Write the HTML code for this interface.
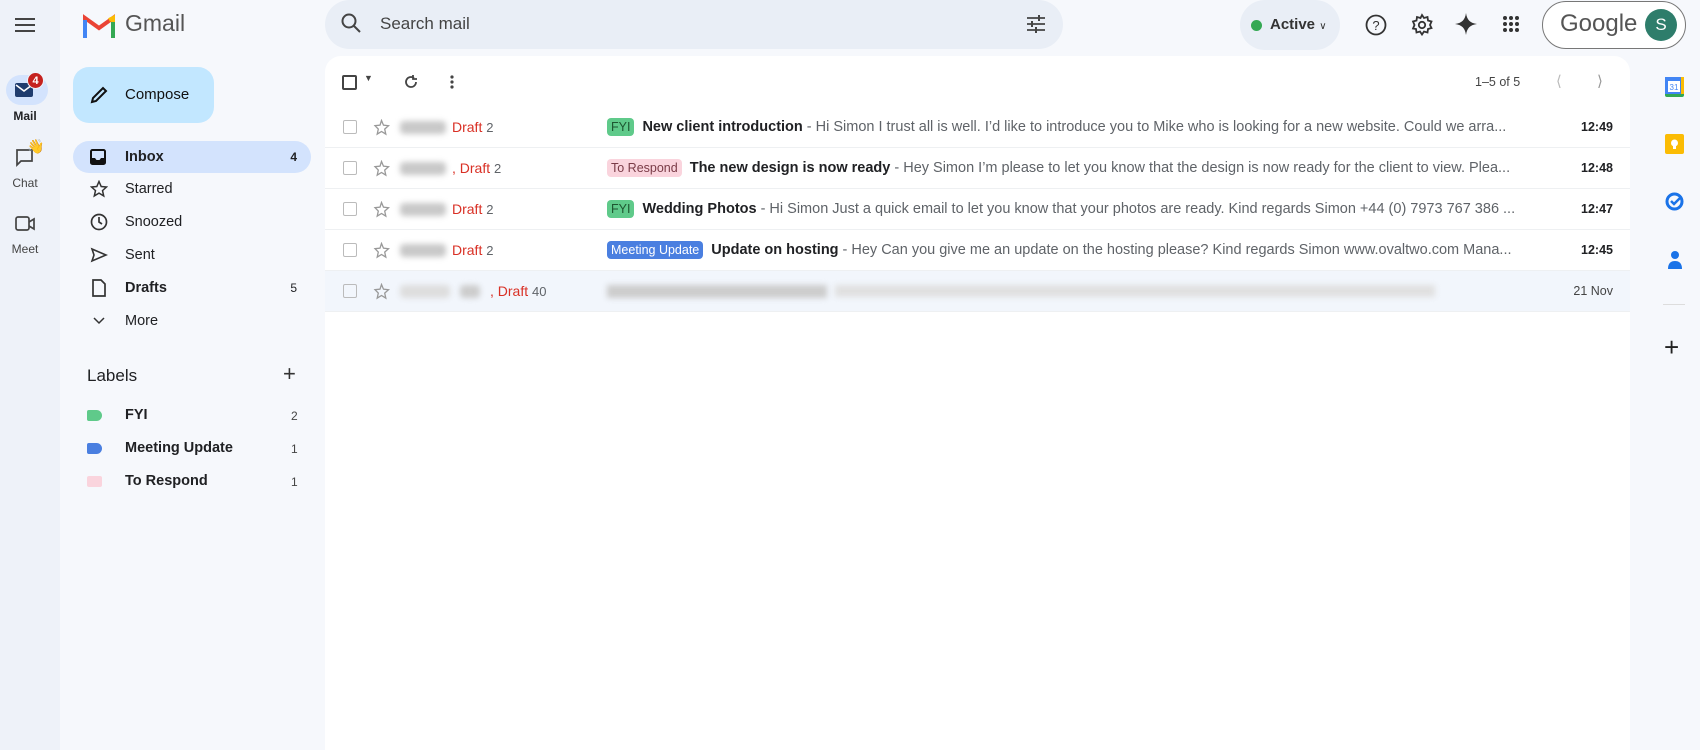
<!DOCTYPE html>
<html><head><meta charset="utf-8"><style>
*{box-sizing:border-box;margin:0;padding:0}
body{width:1700px;height:750px;overflow:hidden;background:#f6f8fc;font-family:"Liberation Sans",Arial,sans-serif;color:#202124;position:relative}
.a{position:absolute}
.rail{left:0;top:0;width:60px;height:750px;background:#eef2f9}
.nav{font-size:14.5px;color:#202124}
.navi{position:absolute;left:73px;width:238px;height:32px;border-radius:16px;display:flex;align-items:center}
.navi svg{position:absolute;left:17px}
.navi span{position:absolute;left:52px}
.navi b{position:absolute;right:14px;font-size:12px;font-weight:normal}
.main{left:325px;top:56px;width:1305px;height:694px;background:#fff;border-radius:16px 16px 0 0}
.row{position:absolute;left:325px;width:1305px;height:41px;border-bottom:1px solid #eef0f2;font-size:14.5px;display:flex;align-items:center;white-space:nowrap}
.cb{position:absolute;left:18px;width:14px;height:14px;border:1.5px solid #bbb;border-radius:2px}
.st{position:absolute;left:48px;top:12px}
.snd{position:absolute;left:75px;width:46px;height:13px;background:#c8c8c8;filter:blur(3px);border-radius:4px}
.dr{position:absolute;left:127px;color:#d93025;font-size:14px}
.dr i{font-style:normal;color:#5f6368;font-size:13px}
.subj{position:absolute;left:282px;display:flex;align-items:center}
.chip{font-size:12.5px;padding:2px 4px;border-radius:4px;margin-right:8px}
.subj b{color:#202124}
.subj em{font-style:normal;color:#5f6368;margin-left:4px}
.tm{position:absolute;right:17px;font-weight:bold;font-size:12.5px}
.lab{position:absolute;left:87px;width:15px;height:11px;border-radius:2px 6px 6px 2px}
</style></head><body>
<div class="a rail"></div>
<!-- rail -->
<svg class="a" style="left:14px;top:16px" width="22" height="18"><path d="M1 3h20M1 9h20M1 15h20" stroke="#444" stroke-width="2"/></svg>
<div class="a" style="left:6px;top:75px;width:42px;height:30px;border-radius:15px;background:#d3e3fd"></div>
<svg class="a" style="left:15px;top:83px" width="18" height="14"><rect x="0" y="0" width="18" height="14" rx="2" fill="#1f3c6e"/><path d="M1 2l8 6 8-6" stroke="#fff" stroke-width="1.6" fill="none"/></svg>
<div class="a" style="left:27px;top:72px;width:17px;height:17px;border-radius:50%;background:#c5221f;color:#fff;font-size:11px;font-weight:bold;text-align:center;line-height:17px;border:1.5px solid #eef2f9">4</div>
<div class="a" style="left:0;top:109px;width:50px;text-align:center;font-size:12px;font-weight:bold">Mail</div>
<svg class="a" style="left:15px;top:148px" width="22" height="22"><path d="M2 2h15v11H6l-4 4z" fill="none" stroke="#444" stroke-width="1.7"/></svg>
<div class="a" style="left:27px;top:138px;font-size:14px">👋</div>
<div class="a" style="left:0;top:176px;width:50px;text-align:center;font-size:12px;color:#444">Chat</div>
<svg class="a" style="left:15px;top:215px" width="22" height="18"><rect x="1" y="2" width="13" height="13" rx="2" fill="none" stroke="#444" stroke-width="1.7"/><path d="M14 7l5-3v10l-5-3" fill="none" stroke="#444" stroke-width="1.7"/></svg>
<div class="a" style="left:0;top:242px;width:50px;text-align:center;font-size:12px;color:#444">Meet</div>
<!-- logo -->
<svg class="a" style="left:83px;top:14px" width="32" height="24" viewBox="0 0 32 24"><path d="M2 24V4l14 10L30 4v20" fill="none" stroke="#ea4335" stroke-width="4"/><path d="M2 24V6" stroke="#4285f4" stroke-width="4"/><path d="M30 24V6" stroke="#34a853" stroke-width="4"/><path d="M26 6l4-2v4" stroke="#fbbc04" stroke-width="4"/></svg>
<div class="a" style="left:125px;top:10px;font-size:23px;color:#555">Gmail</div>
<!-- search -->
<div class="a" style="left:325px;top:0;width:738px;height:49px;border-radius:25px;background:#e9eef6"></div>
<svg class="a" style="left:341px;top:13px" width="22" height="22"><circle cx="8" cy="8" r="6.5" fill="none" stroke="#444" stroke-width="2"/><path d="M13 13l6 6" stroke="#444" stroke-width="2"/></svg>
<div class="a" style="left:380px;top:14px;font-size:17px;color:#444">Search mail</div>
<svg class="a" style="left:1026px;top:14px" width="20" height="20"><path d="M1 4h18M1 10h18M1 16h18" stroke="#444" stroke-width="1.8"/><path d="M13 1v6M6 7v6M10 13v6" stroke="#444" stroke-width="2"/></svg>
<div class="a" style="left:1240px;top:0;width:100px;height:50px;border-radius:25px;background:#e9eef6"></div>
<div class="a" style="left:1251px;top:20px;width:11px;height:11px;border-radius:50%;background:#34a853"></div>
<div class="a" style="left:1270px;top:16px;font-size:15px;font-weight:bold;color:#333">Active <span style="font-size:10px;font-weight:normal">&#8744;</span></div>
<svg class="a" style="left:1365px;top:14px" width="22" height="22"><circle cx="11" cy="11" r="9.5" fill="none" stroke="#333" stroke-width="1.8"/><text x="11" y="16" font-size="13" text-anchor="middle" fill="#333" font-family="Liberation Sans">?</text></svg>
<svg class="a" style="left:1410px;top:13px" width="24" height="24" viewBox="0 0 24 24"><path d="M12 2l2 3 3.5-1 .5 3.5 3.5 1-1.5 3.5 1.5 3-3.5 1-.5 3.5-3.5-1-2 3-2-3-3.5 1-.5-3.5L3 15.5 4.5 12 3 8.5 6.5 7.5 7 4l3.5 1z" fill="none" stroke="#333" stroke-width="1.8"/><circle cx="12" cy="12" r="3.2" fill="none" stroke="#333" stroke-width="1.8"/></svg>
<svg class="a" style="left:1455px;top:13px" width="22" height="22"><path d="M11 0C12 7 15 10 22 11 15 12 12 15 11 22 10 15 7 12 0 11 7 10 10 7 11 0z" fill="#333"/></svg>
<svg class="a" style="left:1502px;top:15px" width="18" height="18"><g fill="#333"><circle cx="3" cy="3" r="2"/><circle cx="9" cy="3" r="2"/><circle cx="15" cy="3" r="2"/><circle cx="3" cy="9" r="2"/><circle cx="9" cy="9" r="2"/><circle cx="15" cy="9" r="2"/><circle cx="3" cy="15" r="2"/><circle cx="9" cy="15" r="2"/><circle cx="15" cy="15" r="2"/></g></svg>
<div class="a" style="left:1542px;top:1px;width:144px;height:48px;border-radius:24px;border:1.5px solid #777;background:#fff"></div>
<div class="a" style="left:1560px;top:10px;font-size:24px;color:#555">Google</div>
<div class="a" style="left:1645px;top:9px;width:32px;height:32px;border-radius:50%;background:#2e7d6b;color:#fff;font-size:17px;text-align:center;line-height:32px">S</div>
<!-- compose -->
<div class="a" style="left:73px;top:67px;width:141px;height:56px;border-radius:16px;background:#c2e7ff"></div>
<svg class="a" style="left:89px;top:85px" width="20" height="20"><path d="M3 17l1-4L14 3l3 3L7 16z" fill="none" stroke="#111" stroke-width="2"/></svg>
<div class="a" style="left:125px;top:86px;font-size:15px;color:#111">Compose</div>
<!-- nav -->
<div class="nav">
<div class="navi" style="top:141px;background:#d3e3fd;font-weight:bold"><svg width="16" height="16"><rect x="1" y="1" width="14" height="14" rx="1.5" fill="none" stroke="#111" stroke-width="2"/><path d="M1 9h4l1.5 2h3L11 9h4v6H1z" fill="#111"/></svg><span>Inbox</span><b style="font-weight:bold">4</b></div>
<div class="navi" style="top:173px"><svg width="18" height="18"><path d="M9 1.5l2.2 5 5.3.5-4 3.6 1.2 5.3L9 13.1 4.3 15.9l1.2-5.3-4-3.6 5.3-.5z" fill="none" stroke="#333" stroke-width="1.5"/></svg><span>Starred</span></div>
<div class="navi" style="top:206px"><svg width="18" height="18"><circle cx="9" cy="9" r="7.5" fill="none" stroke="#333" stroke-width="1.7"/><path d="M9 4v5l3 2" fill="none" stroke="#333" stroke-width="1.7"/></svg><span>Snoozed</span></div>
<div class="navi" style="top:239px"><svg width="18" height="18"><path d="M2 3l14 6-14 6 2-6z" fill="none" stroke="#333" stroke-width="1.6"/></svg><span>Sent</span></div>
<div class="navi" style="top:272px;font-weight:bold"><svg width="18" height="18"><path d="M3 1h8l4 4v12H3z" fill="none" stroke="#333" stroke-width="1.7"/></svg><span>Drafts</span><b>5</b></div>
<div class="navi" style="top:305px"><svg width="18" height="18"><path d="M4 6l5 5 5-5" fill="none" stroke="#333" stroke-width="1.5"/></svg><span>More</span></div>
</div>
<div class="a" style="left:87px;top:366px;font-size:17px">Labels</div>
<div class="a" style="left:283px;top:361px;font-size:22px;color:#333">+</div>
<div class="lab" style="top:410px;background:#5fca8a"></div>
<div class="lab" style="top:443px;background:#4a7fe0"></div>
<div class="lab" style="top:476px;background:#fad4dd;border-radius:2px"></div>
<div class="a" style="left:125px;top:407px;font-size:14.5px;font-weight:bold">FYI</div>
<div class="a" style="left:125px;top:440px;font-size:14.5px;font-weight:bold">Meeting Update</div>
<div class="a" style="left:125px;top:473px;font-size:14.5px;font-weight:bold">To Respond</div>
<div class="a" style="left:291px;top:409px;font-size:12px;color:#444">2</div>
<div class="a" style="left:291px;top:442px;font-size:12px;color:#444">1</div>
<div class="a" style="left:291px;top:475px;font-size:12px;color:#444">1</div>
<!-- main -->
<div class="a main"></div>
<div class="a" style="left:342px;top:75px;width:15px;height:15px;border:2px solid #444;border-radius:2px"></div>
<div class="a" style="left:364px;top:73px;font-size:9px;color:#444">▼</div>
<svg class="a" style="left:403px;top:74px" width="16" height="16"><path d="M13 8a5 5 0 1 1-2-4" fill="none" stroke="#444" stroke-width="1.8"/><path d="M10 1v4h4" fill="none" stroke="#444" stroke-width="1.8"/></svg>
<svg class="a" style="left:449px;top:74px" width="6" height="16"><circle cx="3" cy="3" r="1.6" fill="#444"/><circle cx="3" cy="8" r="1.6" fill="#444"/><circle cx="3" cy="13" r="1.6" fill="#444"/></svg>
<div class="a" style="left:1475px;top:75px;font-size:12.5px;color:#444">1–5 of 5</div>
<div class="a" style="left:1556px;top:72px;font-size:15px;color:#bbb">&#10216;</div>
<div class="a" style="left:1597px;top:72px;font-size:15px;color:#999">&#10217;</div>

<div class="row" style="top:107px"><div class="cb"></div><svg class="st" width="17" height="17"><path d="M8.5 1.5l2 4.7 5 .5-3.8 3.4 1.1 5-4.3-2.6-4.3 2.6 1.1-5L2 6.7l5-.5z" fill="none" stroke="#999" stroke-width="1.3"/></svg><div class="snd"></div><div class="dr">Draft <i>2</i></div><div class="subj"><span class="chip" style="background:#5fca8a;color:#1e5631">FYI</span><b>New client introduction</b><em>- Hi Simon I trust all is well. I’d like to introduce you to Mike who is looking for a new website. Could we arra...</em></div><div class="tm">12:49</div></div>
<div class="row" style="top:148px"><div class="cb"></div><svg class="st" width="17" height="17"><path d="M8.5 1.5l2 4.7 5 .5-3.8 3.4 1.1 5-4.3-2.6-4.3 2.6 1.1-5L2 6.7l5-.5z" fill="none" stroke="#999" stroke-width="1.3"/></svg><div class="snd"></div><div class="dr">, Draft <i>2</i></div><div class="subj"><span class="chip" style="background:#fad4dd;color:#7a3b47">To Respond</span><b>The new design is now ready</b><em>- Hey Simon I’m please to let you know that the design is now ready for the client to view. Plea...</em></div><div class="tm">12:48</div></div>
<div class="row" style="top:189px"><div class="cb"></div><svg class="st" width="17" height="17"><path d="M8.5 1.5l2 4.7 5 .5-3.8 3.4 1.1 5-4.3-2.6-4.3 2.6 1.1-5L2 6.7l5-.5z" fill="none" stroke="#999" stroke-width="1.3"/></svg><div class="snd"></div><div class="dr">Draft <i>2</i></div><div class="subj"><span class="chip" style="background:#5fca8a;color:#1e5631">FYI</span><b>Wedding Photos</b><em>- Hi Simon Just a quick email to let you know that your photos are ready. Kind regards Simon +44 (0) 7973 767 386 ...</em></div><div class="tm">12:47</div></div>
<div class="row" style="top:230px"><div class="cb"></div><svg class="st" width="17" height="17"><path d="M8.5 1.5l2 4.7 5 .5-3.8 3.4 1.1 5-4.3-2.6-4.3 2.6 1.1-5L2 6.7l5-.5z" fill="none" stroke="#999" stroke-width="1.3"/></svg><div class="snd"></div><div class="dr">Draft <i>2</i></div><div class="subj"><span class="chip" style="background:#4a7fe0;color:#fff">Meeting Update</span><b>Update on hosting</b><em>- Hey Can you give me an update on the hosting please? Kind regards Simon www.ovaltwo.com Mana...</em></div><div class="tm">12:45</div></div>
<div class="row" style="top:271px;background:#f2f6fc"><div class="cb"></div><svg class="st" width="17" height="17"><path d="M8.5 1.5l2 4.7 5 .5-3.8 3.4 1.1 5-4.3-2.6-4.3 2.6 1.1-5L2 6.7l5-.5z" fill="none" stroke="#999" stroke-width="1.3"/></svg><div class="snd" style="width:50px;background:#ddd"></div><div class="snd" style="left:135px;width:20px;background:#ccc"></div><div class="dr" style="left:165px">, Draft <i>40</i></div><div class="a" style="left:282px;top:14px;width:220px;height:13px;background:#ccc;filter:blur(3px)"></div><div class="a" style="left:510px;top:14px;width:600px;height:12px;background:#e0e0e0;filter:blur(3px)"></div><div class="tm" style="font-weight:normal;color:#444">21 Nov</div></div>
<!-- right panel -->
<svg class="a" style="left:1665px;top:77px" width="19" height="20"><rect x="0" y="0" width="19" height="20" rx="2" fill="#34a853"/><rect x="0" y="0" width="16" height="17" fill="#4285f4"/><rect x="3" y="4" width="12" height="11" fill="#fff"/><text x="9" y="13" font-size="8" text-anchor="middle" fill="#4285f4" font-family="Liberation Sans">31</text><rect x="16" y="0" width="3" height="17" fill="#fbbc04"/></svg>
<svg class="a" style="left:1665px;top:134px" width="19" height="20"><rect width="19" height="20" rx="2" fill="#fbbc04"/><circle cx="9.5" cy="9" r="3.5" fill="#fff"/><rect x="8" y="12" width="3" height="3" fill="#fff"/></svg>
<svg class="a" style="left:1665px;top:192px" width="19" height="19"><circle cx="9.5" cy="9.5" r="7.5" fill="none" stroke="#1a73e8" stroke-width="3"/><path d="M6 9l3 3 7-7" fill="none" stroke="#1a73e8" stroke-width="2.5"/></svg>
<svg class="a" style="left:1667px;top:250px" width="16" height="20"><circle cx="8" cy="5" r="4" fill="#1a73e8"/><path d="M1 19c0-6 3-8 7-8s7 2 7 8z" fill="#1a73e8"/></svg>
<div class="a" style="left:1663px;top:304px;width:22px;height:1px;background:#ddd"></div>
<div class="a" style="left:1664px;top:334px;font-size:26px;color:#222;line-height:1">+</div>
</body></html>
